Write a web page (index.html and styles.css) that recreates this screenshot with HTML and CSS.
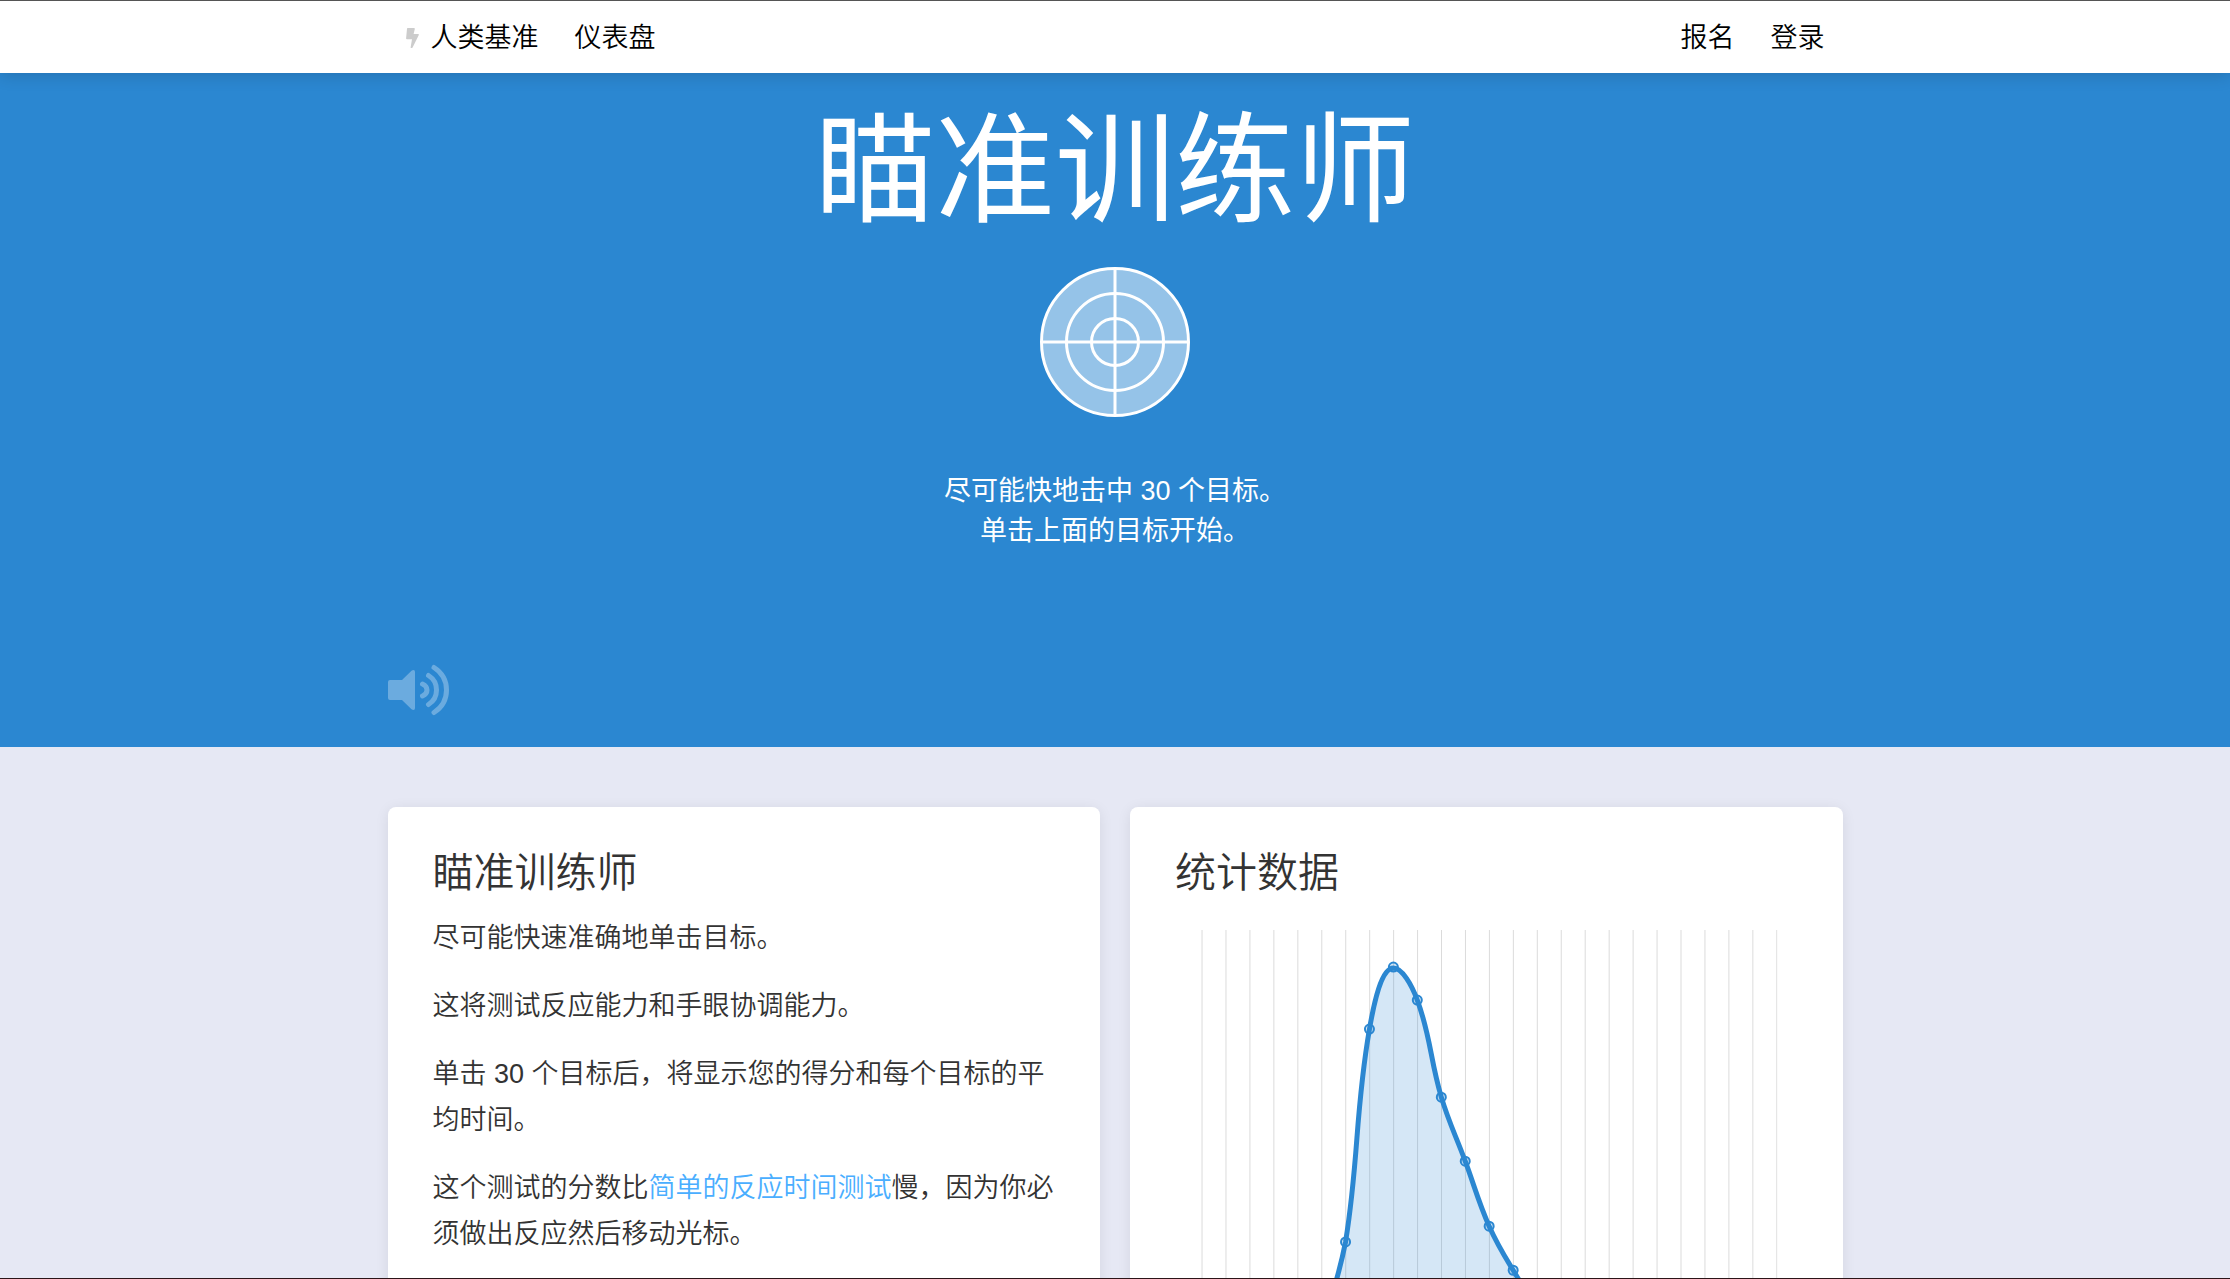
FILE: index.html
```html
<!DOCTYPE html>
<html lang="zh-CN">
<head>
<meta charset="utf-8">
<meta name="viewport" content="width=device-width, initial-scale=1">
<title>瞄准训练师</title>
<link rel="stylesheet" href="styles.css">
</head>
<body>
<header class="site-header">
  <nav class="container nav">
    <div class="nav-group">
      <a class="nav-link brand" href="#">
        <svg class="bolt" viewBox="0 0 13 20" aria-hidden="true"><path d="M1.6 0H8q1 0 .8.9L7.6 6h4.6q1.100 0 .6 1L6.600 19.400Q6.200 20 5.400 20q-.9 0-.7-.9L6 11.300H1q-1 0-.9-1L1 .8Q1.100 0 1.600 0z"/></svg>
        <span>人类基准</span>
      </a>
      <a class="nav-link" href="#">仪表盘</a>
    </div>
    <div class="nav-group">
      <a class="nav-link" href="#">报名</a>
      <a class="nav-link" href="#">登录</a>
    </div>
  </nav>
</header>
<main class="page">
  <section class="hero">
    <div class="container hero-inner">
      <h1 class="hero-title">瞄准训练师</h1>
      <button class="target" type="button" aria-label="开始">
        <svg viewBox="0 0 150 150" aria-hidden="true">
          <circle class="target-disc" cx="75" cy="75" r="73.500"/>
          <circle cx="75" cy="75" r="48.500"/>
          <circle cx="75" cy="75" r="23.500"/>
          <path d="M75 1v148M1 75h148"/>
        </svg>
      </button>
      <p class="hero-text">尽可能快地击中 30 个目标。<br>单击上面的目标开始。</p>
      <button class="sound" type="button" aria-label="声音">
        <svg viewBox="0 0 62 52" aria-hidden="true">
          <path class="speaker" d="M2 16h12L23.500 6.700Q24.500 6 25.500 6 27 6 27 8v36q0 2-1.500 2-1 0-2-.7L14 36H2q-2 0-2-2V18q0-2 2-2z"/>
          <path class="wave" d="M34.500 20q4.500 2 4.500 6t-4.500 6M40.500 11.500q8 5 8 14.500t-8 14.500M46 3.500q12.500 8 12.500 22.500T46 48.500"/>
        </svg>
      </button>
    </div>
  </section>
  <section class="container cards">
    <article class="card">
      <h2>瞄准训练师</h2>
      <p>尽可能快速准确地单击目标。</p>
      <p>这将测试反应能力和手眼协调能力。</p>
      <p>单击 30 个目标后，将显示您的得分和每个目标的平均时间。</p>
      <p>这个测试的分数比<a href="#">简单的反应时间测试</a>慢，因为你必须做出反应然后移动光标。</p>
    </article>
    <article class="card">
      <h2>统计数据</h2>
      <svg class="chart" viewBox="0 0 622 420" role="img" aria-label="统计数据">
        <defs>
          <pattern id="grid" x="26.500" width="23.930" height="420" patternUnits="userSpaceOnUse"><path d="M.5 0v420" stroke="#000" stroke-opacity=".14"/></pattern>
        </defs>
        <rect x="26" width="576" height="420" fill="url(#grid)"/>
        <path class="area" d="M122.500 415C132 411 142 405 146.500 395C152 380 163.500 347 170.400 311.700C184 227.400 179.700 182.800 194.300 99C198.800 72.900 206.300 38 218.200 38C227 38 236.500 54.900 242.100 70C255.700 106.900 254.700 128.700 266.100 167C273.900 193 280.400 205 290 231C299.600 257 302.800 270.700 313.900 296C322 314.300 327.500 322.900 337.900 340C346.700 354.500 352 364 361.800 375L410 415V420H122z"/>
        <path class="curve" d="M122.500 415C132 411 142 405 146.500 395C152 380 163.500 347 170.400 311.700C184 227.400 179.700 182.800 194.300 99C198.800 72.900 206.300 38 218.200 38C227 38 236.500 54.900 242.100 70C255.700 106.900 254.700 128.700 266.100 167C273.900 193 280.400 205 290 231C299.600 257 302.800 270.700 313.900 296C322 314.300 327.500 322.900 337.900 340C346.700 354.500 352 364 361.800 375L410 415"/>
        <g class="points">
          <circle cx="170.400" cy="311.700" r="4.500"/><circle cx="194.300" cy="99" r="4.500"/><circle cx="218.200" cy="37" r="4.500"/><circle cx="242.100" cy="70" r="4.500"/><circle cx="266.100" cy="167" r="4.500"/><circle cx="290" cy="231" r="4.500"/><circle cx="313.900" cy="296" r="4.500"/><circle cx="337.900" cy="340" r="4.500"/><circle cx="361.800" cy="375" r="4.500"/>
        </g>
      </svg>
    </article>
  </section>
</main>
</body>
</html>
```
FILE: styles.css
```css
* { box-sizing: border-box; }

body {
  display: flex;
  flex-direction: column;
  height: 100vh;
  margin: 0;
  border-top: 1px solid #555;
  border-bottom: 1px solid #2b1418;
  background: #e6e8f4;
  color: #333;
  font-family: "Liberation Sans", "Noto Sans CJK SC", sans-serif;
  font-size: 27px;
  font-weight: 350;
  overflow: hidden;
}

h1, h2, p { margin: 0; font-weight: inherit; }

button {
  display: block;
  padding: 0;
  border: 0;
  background: none;
  cursor: pointer;
}

svg { display: block; width: 100%; }

.container {
  width: 100%;
  max-width: 1455px;
  margin: 0 auto;
}

.site-header {
  position: relative;
  z-index: 1;
  flex: none;
  background: #fff;
  box-shadow: 0 2px 16px rgba(0, 0, 0, 0.16);
}

.nav { display: flex; justify-content: space-between; }
.nav-group { display: flex; }

.nav-link {
  display: flex;
  align-items: center;
  gap: 12px;
  padding: 17px 18px 15px;
  color: #000;
  line-height: 40px;
  text-decoration: none;
}

.bolt { width: 13px; height: 20px; fill: #ccc; }

.page {
  flex: 1;
  min-height: 0;
  overflow: auto;
  scrollbar-width: none;
}

.hero { background: #2b87d1; color: #fff; font-weight: 400; }

.hero-inner {
  display: flex;
  flex-direction: column;
  align-items: center;
  padding: 28px 0 31px;
}

.hero-title { font-size: 120px; line-height: 140px; }

.target { width: 150px; margin-top: 26px; }
.target svg { fill: none; stroke: #fff; stroke-width: 3; }
.target .target-disc { fill: rgba(255, 255, 255, 0.5); }

.hero-text { margin-top: 54px; line-height: 40px; text-align: center; }

.sound { align-self: flex-start; width: 62px; margin-top: 113px; opacity: 0.3; }
.speaker { fill: #fff; }
.wave { fill: none; stroke: #fff; stroke-width: 5; stroke-linecap: round; }

.cards {
  display: grid;
  grid-template-columns: 1fr 1fr;
  gap: 30px;
  padding: 60px 0;
}

.card {
  padding: 37px 45px 45px;
  border-radius: 8px;
  background: #fff;
  box-shadow: 0 2px 14px rgba(0, 0, 0, 0.08);
}

.card h2 { margin-bottom: 13px; font-size: 41px; line-height: 58px; }
.card p { margin-bottom: 22px; line-height: 46px; }
.card a { color: #4aaeff; text-decoration: none; }

.chart { margin-top: 28px; }
.area { fill: rgba(43, 135, 209, 0.2); }
.curve { fill: none; stroke: #2b87d1; stroke-width: 5; }
.points { fill: rgba(43, 135, 209, 0.2); stroke: #2b87d1; stroke-width: 2; }
```
